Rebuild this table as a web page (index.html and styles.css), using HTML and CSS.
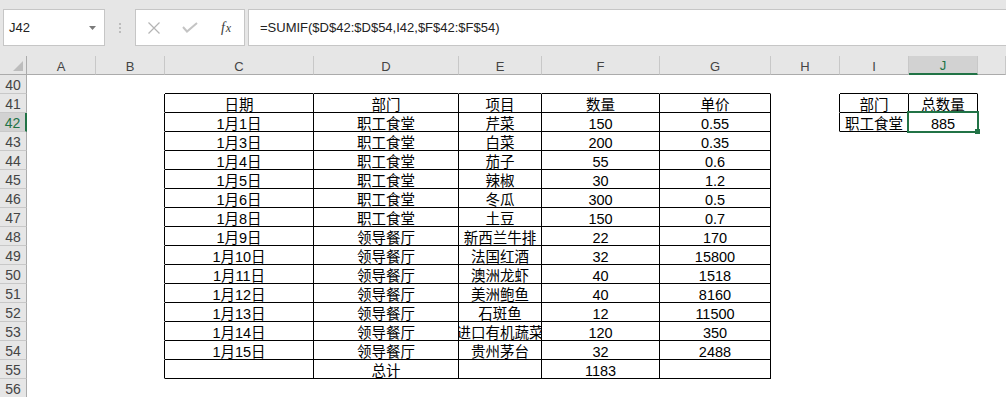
FILE: index.html
```html
<!DOCTYPE html>
<html lang="zh-CN">
<head>
<meta charset="utf-8">
<title>SUMIF</title>
<link rel="stylesheet" href="styles.css">
</head>
<body>
<div class="topbar">
  <div class="namebox">
    <span>J42</span>
    <svg class="dd" width="7" height="4" viewBox="0 0 7 4"><polygon points="0,0 7,0 3.5,4" fill="#7a7a7a"/></svg>
  </div>
  <svg class="dots" width="2" height="10" viewBox="0 0 2 10"><rect x="0" y="0" width="2" height="2" fill="#bcbcbc"/><rect x="0" y="4" width="2" height="2" fill="#bcbcbc"/><rect x="0" y="8" width="2" height="2" fill="#bcbcbc"/></svg>
  <div class="iconbox">
    <div class="slot"><svg width="12" height="12" viewBox="0 0 12 12"><path d="M0.5 0.5 L11.5 11.5 M11.5 0.5 L0.5 11.5" stroke="#b4b4b4" stroke-width="1.2" fill="none"/></svg></div>
    <div class="slot"><svg width="16" height="11" viewBox="0 0 16 11"><path d="M1 5 L5 9.5 L15 1" stroke="#c4c4c4" stroke-width="2" fill="none"/></svg></div>
    <div class="slot fx"><span class="f">f</span><span class="x">x</span></div>
  </div>
  <div class="formula">=SUMIF($D$42:$D$54,I42,$F$42:$F$54)</div>
</div>

<div class="sheet">
  <div class="row hdr">
    <div class="corner"><svg width="10" height="10" viewBox="0 0 10 10"><polygon points="10,0 10,10 0,10" fill="#bdbdbd"/></svg></div>
    <div>A</div><div>B</div><div>C</div><div>D</div><div>E</div><div>F</div><div>G</div><div>H</div><div>I</div><div class="hsel">J</div><div></div>
  </div>
  <div class="row">
    <div class="rh">40</div><div></div><div></div><div class="tt"></div><div class="tt"></div><div class="tt"></div><div class="tt"></div><div class="tt"></div><div></div><div class="tt"></div><div class="tt"></div>
  </div>
  <div class="row">
    <div class="rh">41</div><div></div><div class="tl"></div><div class="t">日期</div><div class="t">部门</div><div class="t">项目</div><div class="t">数量</div><div class="t">单价</div><div class="tl"></div><div class="t">部门</div><div class="t">总数量</div>
  </div>
  <div class="row">
    <div class="rh rsel">42</div><div></div><div class="tl"></div><div class="t">1月1日</div><div class="t">职工食堂</div><div class="t">芹菜</div><div class="t">150</div><div class="t">0.55</div><div class="tl"></div><div class="t">职工食堂</div><div class="t active">885<span class="sel"></span><span class="handle"></span></div>
  </div>
  <div class="row">
    <div class="rh">43</div><div></div><div class="tl"></div><div class="t">1月3日</div><div class="t">职工食堂</div><div class="t">白菜</div><div class="t">200</div><div class="t">0.35</div>
  </div>
  <div class="row">
    <div class="rh">44</div><div></div><div class="tl"></div><div class="t">1月4日</div><div class="t">职工食堂</div><div class="t">茄子</div><div class="t">55</div><div class="t">0.6</div>
  </div>
  <div class="row">
    <div class="rh">45</div><div></div><div class="tl"></div><div class="t">1月5日</div><div class="t">职工食堂</div><div class="t">辣椒</div><div class="t">30</div><div class="t">1.2</div>
  </div>
  <div class="row">
    <div class="rh">46</div><div></div><div class="tl"></div><div class="t">1月6日</div><div class="t">职工食堂</div><div class="t">冬瓜</div><div class="t">300</div><div class="t">0.5</div>
  </div>
  <div class="row">
    <div class="rh">47</div><div></div><div class="tl"></div><div class="t">1月8日</div><div class="t">职工食堂</div><div class="t">土豆</div><div class="t">150</div><div class="t">0.7</div>
  </div>
  <div class="row">
    <div class="rh">48</div><div></div><div class="tl"></div><div class="t">1月9日</div><div class="t">领导餐厅</div><div class="t">新西兰牛排</div><div class="t">22</div><div class="t">170</div>
  </div>
  <div class="row">
    <div class="rh">49</div><div></div><div class="tl"></div><div class="t">1月10日</div><div class="t">领导餐厅</div><div class="t">法国红酒</div><div class="t">32</div><div class="t">15800</div>
  </div>
  <div class="row">
    <div class="rh">50</div><div></div><div class="tl"></div><div class="t">1月11日</div><div class="t">领导餐厅</div><div class="t">澳洲龙虾</div><div class="t">40</div><div class="t">1518</div>
  </div>
  <div class="row">
    <div class="rh">51</div><div></div><div class="tl"></div><div class="t">1月12日</div><div class="t">领导餐厅</div><div class="t">美洲鲍鱼</div><div class="t">40</div><div class="t">8160</div>
  </div>
  <div class="row">
    <div class="rh">52</div><div></div><div class="tl"></div><div class="t">1月13日</div><div class="t">领导餐厅</div><div class="t">石斑鱼</div><div class="t">12</div><div class="t">11500</div>
  </div>
  <div class="row">
    <div class="rh">53</div><div></div><div class="tl"></div><div class="t">1月14日</div><div class="t">领导餐厅</div><div class="t">进口有机蔬菜</div><div class="t">120</div><div class="t">350</div>
  </div>
  <div class="row">
    <div class="rh">54</div><div></div><div class="tl"></div><div class="t">1月15日</div><div class="t">领导餐厅</div><div class="t">贵州茅台</div><div class="t">32</div><div class="t">2488</div>
  </div>
  <div class="row">
    <div class="rh">55</div><div></div><div class="tl"></div><div class="t"></div><div class="t">总计</div><div class="t"></div><div class="t">1183</div><div class="t"></div>
  </div>
  <div class="row">
    <div class="rh">56</div>
  </div>
</div>
</body>
</html>
```

FILE: styles.css
```css
* { box-sizing: border-box; }
html, body { margin: 0; padding: 0; }
body {
  width: 1006px;
  height: 397px;
  overflow: hidden;
  background: #fff;
  color: #000;
  font-family: "Liberation Sans", "Noto Sans CJK SC", sans-serif;
}

/* ---------- formula bar ---------- */
.topbar {
  height: 56px;
  background: #e6e6e6;
  display: flex;
  align-items: flex-start;
  padding-top: 9px;
}
.namebox {
  margin-left: 3px;
  width: 102px;
  height: 37px;
  background: #fff;
  border: 1px solid #c6c6c6;
  display: flex;
  align-items: center;
  justify-content: space-between;
  padding: 0 8px 0 5px;
  font-size: 13px;
  line-height: 35px;
  color: #222;
}
.dots {
  margin: 14px 0 0 14px;
}
.iconbox {
  margin-left: 14px;
  width: 110px;
  height: 37px;
  background: #fff;
  border: 1px solid #c6c6c6;
  display: flex;
  align-items: center;
}
.slot {
  width: 36px;
  height: 35px;
  display: flex;
  align-items: center;
  justify-content: center;
}
.fx {
  font-family: "Liberation Serif", serif;
  font-style: italic;
  color: #3a3a3a;
  padding-top: 1px;
}
.fx .f { font-size: 14px; }
.fx .x { font-size: 12px; margin-left: 1px; }
.formula {
  margin-left: 3px;
  flex: 1;
  height: 37px;
  background: #fff;
  border: 1px solid #c6c6c6;
  border-right: none;
  padding-left: 11px;
  font-size: 13px;
  line-height: 35px;
  color: #222;
  white-space: nowrap;
}

/* ---------- sheet grid ---------- */
.row {
  display: grid;
  grid-template-columns: 27px 69px 69px 149px 145px 83px 118px 111px 69px 69px 69px 1fr;
  height: 19px;
}
.row > div {
  border-right: 1px solid transparent;
  border-bottom: 1px solid transparent;
  display: flex;
  align-items: flex-end;
  justify-content: center;
  overflow: hidden;
  white-space: nowrap;
  font-size: 14.5px;
  line-height: 14px;
}
.hdr > div {
  background: #e6e6e6;
  border-right-color: #c8c8c8;
  border-bottom-color: #ababab;
  color: #444;
  font-size: 13px;
}
.row > .corner {
  border-right-color: #ababab;
  justify-content: flex-end;
  padding: 0 3px 3px 0;
}
.row > .rh {
  background: #e6e6e6;
  border-right-color: #ababab;
  border-bottom-color: #c8c8c8;
  color: #444;
  font-size: 14px;
  padding-bottom: 1px;
}
.row > .hsel {
  background: #d2d2d2;
  border-bottom: 2px solid #217346;
  color: #217346;
}
.row > .rsel {
  background: #d2d2d2;
  border-right: 2px solid #217346;
  color: #217346;
}

/* ---------- borders of the data tables ---------- */
.row > .t { border-right-color: #000; border-bottom-color: #000; }
.row > .tl { border-right-color: #000; }
.row > .tt { border-bottom-color: #000; }

/* ---------- active cell ---------- */
.row > .active {
  position: relative;
  overflow: visible;
}
.sel {
  position: absolute;
  inset: -2px;
  border: 2px solid #217346;
  z-index: 2;
}
.handle {
  position: absolute;
  right: -3px;
  bottom: -3px;
  width: 5px;
  height: 5px;
  background: #217346;
  z-index: 3;
}
```
